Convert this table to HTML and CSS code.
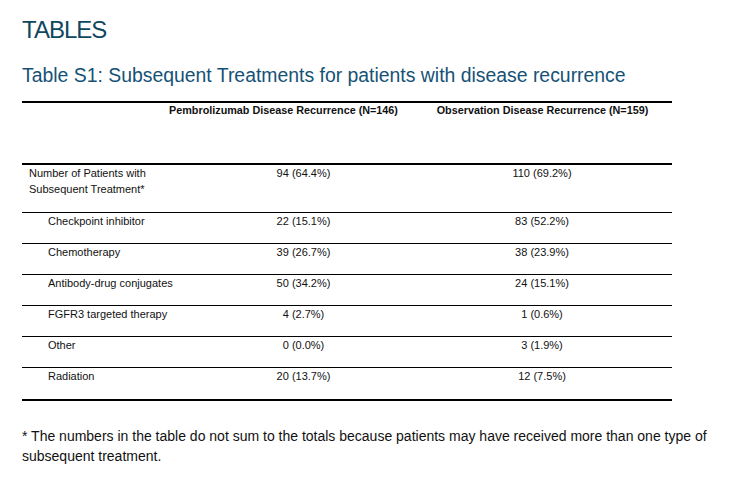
FILE: index.html
```html
<!DOCTYPE html>
<html lang="en">
<head>
<meta charset="utf-8">
<title>Tables</title>
<link rel="stylesheet" href="styles.css">
</head>
<body>
<div class="page">
  <h1 class="title">TABLES</h1>
  <h2 class="subtitle">Table S1: Subsequent Treatments for patients with disease recurrence</h2>
  <div class="table">
    <div class="head">
      <div></div>
      <div class="hcell">Pembrolizumab Disease Recurrence (N=146)</div>
      <div class="hcell">Observation Disease Recurrence (N=159)</div>
    </div>
    <div class="row first">
      <div class="label">Number of Patients with<br>Subsequent Treatment*</div>
      <div class="val">94 (64.4%)</div>
      <div class="val">110 (69.2%)</div>
    </div>
    <div class="row">
      <div class="label sub">Checkpoint inhibitor</div>
      <div class="val">22 (15.1%)</div>
      <div class="val">83 (52.2%)</div>
    </div>
    <div class="row">
      <div class="label sub">Chemotherapy</div>
      <div class="val">39 (26.7%)</div>
      <div class="val">38 (23.9%)</div>
    </div>
    <div class="row">
      <div class="label sub">Antibody-drug conjugates</div>
      <div class="val">50 (34.2%)</div>
      <div class="val">24 (15.1%)</div>
    </div>
    <div class="row">
      <div class="label sub">FGFR3 targeted therapy</div>
      <div class="val">4 (2.7%)</div>
      <div class="val">1 (0.6%)</div>
    </div>
    <div class="row">
      <div class="label sub">Other</div>
      <div class="val">0 (0.0%)</div>
      <div class="val">3 (1.9%)</div>
    </div>
    <div class="row last">
      <div class="label sub">Radiation</div>
      <div class="val">20 (13.7%)</div>
      <div class="val">12 (7.5%)</div>
    </div>
  </div>
  <p class="note">* The numbers in the table do not sum to the totals because patients may have received more than one type of subsequent treatment.</p>
</div>
</body>
</html>
```

FILE: styles.css
```css
html, body {
  margin: 0;
  padding: 0;
  background: #ffffff;
}

.page {
  padding: 16px 0 0 22px;
  font-family: "Liberation Sans", Arial, sans-serif;
  color: #111111;
}

.title {
  margin: 0;
  font-size: 24px;
  line-height: 28px;
  font-weight: normal;
  letter-spacing: -1px;
  color: #0f4761;
}

.subtitle {
  margin: 20px 0 0 0;
  font-size: 19.4px;
  line-height: 22px;
  font-weight: normal;
  color: #155276;
}

.table {
  margin-top: 15px;
  width: 650px;
  font-size: 11px;
}

.head {
  display: grid;
  grid-template-columns: 132px 259px 259px;
  border-top: 2px solid #000;
  padding-top: 1px;
  box-sizing: border-box;
  height: 62px;
}

.hcell {
  text-align: center;
  font-weight: bold;
  line-height: 13px;
  font-size: 10.8px;
}

.row {
  display: grid;
  grid-template-columns: 173px 217px 260px;
  border-top: 1px solid #000;
  height: 31px;
  box-sizing: border-box;
  line-height: 16px;
}

.row.first {
  border-top: 2px solid #000;
  height: 49px;
}

.row.last {
  height: 34px;
  border-bottom: 2px solid #000;
}

.label {
  padding-left: 7px;
  white-space: nowrap;
}

.label.sub {
  padding-left: 26px;
}

.val {
  text-align: center;
}

.note {
  margin: 25px 0 0 0;
  width: 700px;
  font-size: 14px;
  line-height: 20px;
}
```
